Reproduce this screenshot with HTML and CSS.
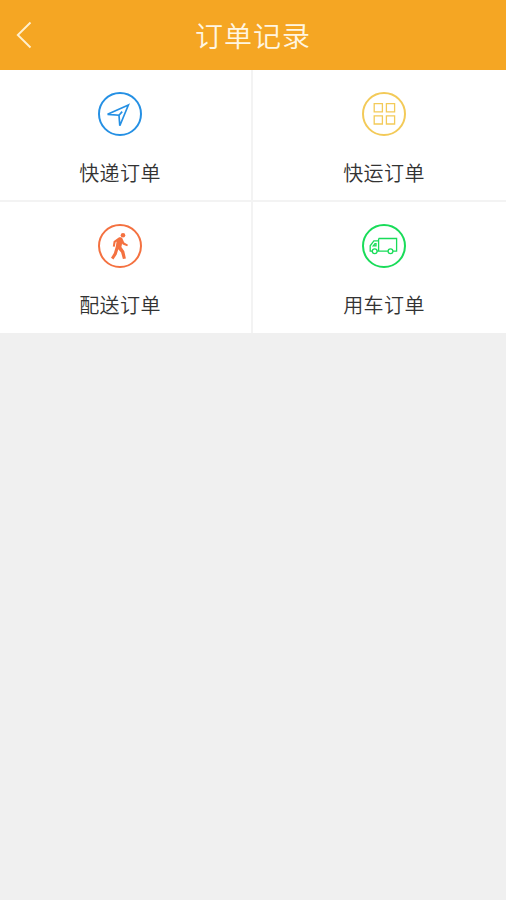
FILE: index.html
```html
<!DOCTYPE html>
<html lang="zh-CN">
<head>
<meta charset="utf-8">
<title>订单记录</title>
<link rel="stylesheet" href="styles.css">
</head>
<body>
<header class="bar">
  <a class="back" aria-label="返回"><svg width="16" height="28" viewBox="0 0 16 28"><path d="M14.5 1.5 1.8 14l12.7 12.5"/></svg></a>
  <h1 class="title">订单记录</h1>
</header>
<main class="grid">
  <a class="tile">
    <svg class="icon blue" viewBox="0 0 44 44"><circle cx="22" cy="22" r="21"/><path class="medium" d="M30.4 13 9.6 22.3l11.4.9.8 10.6z"/><path class="medium" d="m21 23.2 3.2-3.6"/></svg>
    <span class="label">快递订单</span>
  </a>
  <a class="tile">
    <svg class="icon yellow" viewBox="0 0 44 44"><circle cx="22" cy="22" r="21"/><path class="thin" d="M12.2 11.7h8.2v8.2h-8.2zM24.4 11.7h8.2v8.2h-8.2zM12.2 23.8h8.2V32h-8.2zM24.4 23.8h8.2V32h-8.2z"/></svg>
    <span class="label">快运订单</span>
  </a>
  <a class="tile">
    <svg class="icon orange" viewBox="0 0 44 44"><circle cx="22" cy="22" r="21"/><circle class="solid" cx="25" cy="11.2" r="2.3"/><path class="solid" d="M20.4 13.7c1.2-.7 3.3-.5 4 .7l1.8 4 3.8 2.3-.8 1.6-4.5-1.9-.6-1-.7 3.7 2.9 4.1 1.6 7.2-3 .7-1.8-6.7-2.8-3.1-1.6 5.2-3.3 5-2.4-1.7 2.9-4.7 1.9-6.5.8-5-1.1 1-.7 4.2-2-.3.8-5.2z"/></svg>
    <span class="label">配送订单</span>
  </a>
  <a class="tile">
    <svg class="icon green" viewBox="0 0 44 44"><circle cx="22" cy="22" r="21"/><path class="thin" d="M10.3 27.2H8.2v-5.4l3.7-4.9h4.7v10.3h-1.5M16.6 14.5h18v12.7h-3.7M16.6 14.5v12.7h9.4M11.2 21.8l1.8-2.2h1v2.2z"/><circle class="thin" cx="12.7" cy="27.3" r="2.4"/><circle class="thin" cx="28.5" cy="27.3" r="2.4"/></svg>
    <span class="label">用车订单</span>
  </a>
</main>
</body>
</html>
```

FILE: styles.css
```css
* { box-sizing: border-box; }
body {
  margin: 0;
  min-height: 100vh;
  background: #f0f0f0;
  color: #333;
  font-family: "Noto Sans CJK SC", sans-serif;
}
.bar {
  display: grid;
  grid-template-columns: 60px 1fr 60px;
  align-items: center;
  height: 70px;
  background: #f5a623;
}
.back { display: flex; padding-left: 16px; }
.back svg { fill: none; stroke: #fff0cf; stroke-width: 1.9; }
.title {
  margin: 0;
  color: #fff6e2;
  font-size: 28px;
  font-weight: 350;
  line-height: 40px;
  letter-spacing: 1px;
  text-align: center;
}
.grid {
  display: grid;
  grid-template-columns: 251px 253px;
  grid-template-rows: 130px 131px;
  gap: 2px;
  background: #f3f3f3;
}
.tile {
  display: flex;
  flex-direction: column;
  align-items: center;
  padding: 22px 11px 0 0;
  background: #fff;
}
.tile:nth-child(even) { padding: 22px 0 0 9px; }
.icon {
  width: 44px;
  height: 44px;
  fill: none;
  stroke: currentColor;
  stroke-width: 2;
}
.medium { stroke-width: 1.7; }
.thin { stroke-width: 1.3; }
.solid { fill: currentColor; stroke: none; }
.blue { color: #2590e4; }
.yellow { color: #f3ca58; }
.orange { color: #f47140; }
.green { color: #19dc59; }
.label {
  margin-top: 22px;
  font-size: 20px;
  font-weight: 350;
  line-height: 30px;
  letter-spacing: 0.4px;
}
```
